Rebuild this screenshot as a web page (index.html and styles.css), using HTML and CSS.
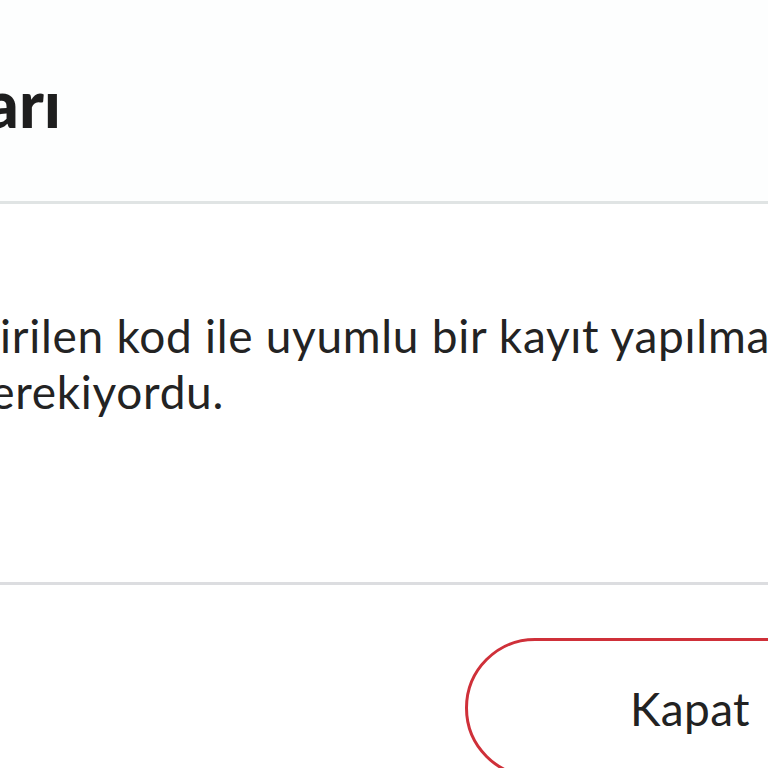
FILE: index.html
```html
<!DOCTYPE html>
<html lang="tr">
<head>
<meta charset="utf-8">
<link rel="stylesheet" href="styles.css">
<title>Uyarı</title>
</head>
<body>
<div class="dialog">
  <header class="dialog-header">
    <h1 class="dialog-title">Uyarı</h1>
  </header>
  <section class="dialog-body">
    <p class="dialog-text">Girilen kod ile uyumlu bir kayıt yapılması<br>gerekiyordu.</p>
  </section>
  <footer class="dialog-footer">
    <button class="btn-close" type="button">Kapat</button>
  </footer>
</div>
</body>
</html>
```
FILE: styles.css
```css
html, body {
  margin: 0;
  padding: 0;
  background: #ffffff;
  overflow: hidden;
  width: 768px;
  height: 768px;
}

.dialog {
  width: 1100px;
  margin-left: -30px;
  font-family: "Lato", "Noto Sans", sans-serif;
  color: #222222;
}

.dialog-header {
  height: 204px;
  box-sizing: border-box;
  background: #fdfefe;
  border-bottom: 3px solid #e0e4e4;
  padding-top: 67px;
}

.dialog-title {
  margin: 0 0 0 -68px;
  font-size: 66px;
  font-weight: 900;
  line-height: 72px;
  color: #1e1e1e;
}

.dialog-body {
  height: 381px;
  box-sizing: border-box;
  border-bottom: 3px solid #dcdde0;
  padding-top: 104px;
}

.dialog-text {
  margin: 0 0 0 -4px;
  font-size: 46px;
  line-height: 56px;
  letter-spacing: 0.7px;
  color: #232323;
}

.dialog-footer {
  padding-top: 53px;
  padding-left: 495px;
}

.btn-close {
  width: 450px;
  height: 140px;
  box-sizing: border-box;
  border: 3px solid #cf3039;
  border-radius: 70px;
  background: #ffffff;
  font-family: "Lato", "Noto Sans", sans-serif;
  font-size: 46px;
  letter-spacing: 0.4px;
  color: #222222;
  padding: 0;
}
```
